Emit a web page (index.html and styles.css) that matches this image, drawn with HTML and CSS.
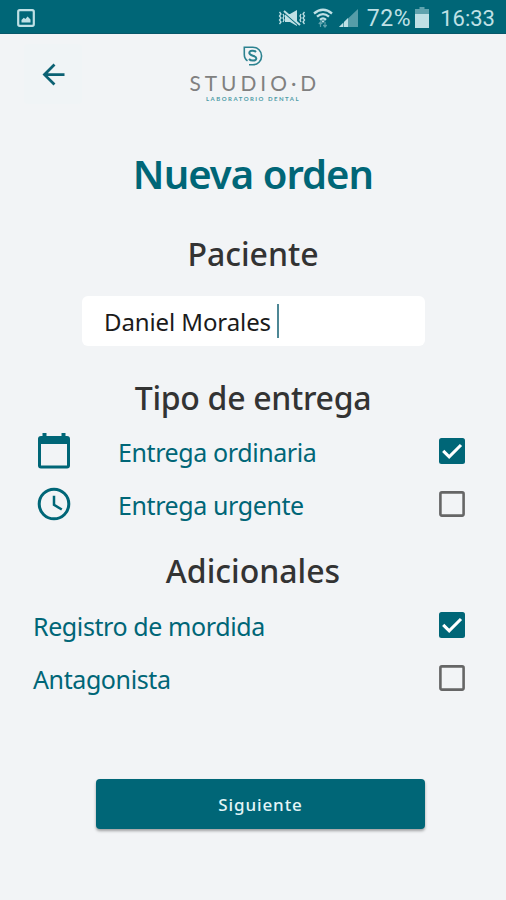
FILE: index.html
```
<!DOCTYPE html>
<html lang="es">
<head>
  <meta charset="UTF-8" />
  <meta name="viewport" content="width=device-width, initial-scale=1.0" />
  <title>Nueva orden</title>
  <link rel="stylesheet" href="styles.css">
</head>
<body>

  <div class="status">
    <svg class="status__picture" viewBox="0 0 18 18" width="18" height="18">
      <rect x="1.2" y="1.2" width="15.6" height="15.6" rx="1.5" fill="none" stroke="currentColor" stroke-width="2.2" />
      <path d="M4.5 13.5V11l2.300-2.200 1.600 1.200 2.200-2.400 2.900 3v2.900z" fill="currentColor" />
    </svg>
    <svg class="status__mute" viewBox="0 0 28 18" width="28" height="18">
      <path d="M1.5 3l1.500 2-1.500 2 1.500 2-1.500 2 1.500 2-1.500 2M5 5l1 2-1 2 1 2-1 2M23 5l-1 2 1 2-1 2 1 2M26.500 3L25 5l1.500 2L25 9l1.500 2L25 13l1.500 2" fill="none" stroke="currentColor" stroke-width="1.300" />
      <path d="M7 5h5l7-4v16l-7-4H7z" fill="currentColor" />
      <path d="M6.500 4l16 14" stroke="#006677" stroke-width="1.500" />
      <path d="M6 2l16 14" stroke="currentColor" stroke-width="2" />
    </svg>
    <svg class="status__wifi" viewBox="0 0 20 20" width="20" height="20">
      <g fill="none" stroke="currentColor" stroke-width="2.300">
        <path d="M1 5.500Q10-2 19 5.500M4 8.700Q10 3.500 16 8.700M7 11.800Q10 9 13 11.800" />
      </g>
      <path d="M8 12.500h4l-2 2.500z" fill="currentColor" />
      <path d="M7.500 19v-5M5.800 16l1.700-2 1.700 2M12 14v5M10.300 17l1.700 2 1.700-2" fill="none" stroke="currentColor" stroke-width="1.200" opacity=".5" />
    </svg>
    <svg class="status__signal" viewBox="0 0 19 18" width="19" height="18">
      <path d="M0 18L19 0v18z" fill="currentColor" opacity=".45" />
      <path d="M0 18l4-4v4zM5 18v-5l4-4v9z" fill="currentColor" />
    </svg>
    <span class="status__percent">72%</span>
    <svg class="status__battery" viewBox="0 0 14 21" width="14" height="21">
      <path d="M4.500 0h5v2H14v6H0V2h4.500z" fill="currentColor" opacity=".5" />
      <path d="M0 7h14v14H0z" fill="currentColor" />
    </svg>
    <span class="status__time">16:33</span>
  </div>

  <header class="header">
    <button class="back" aria-label="Volver">
      <svg viewBox="0 0 24 24" width="33" height="33">
        <path d="M20 11H7.830l5.590-5.590L12 4l-8 8 8 8 1.410-1.410L7.830 13H20z" fill="currentColor" />
      </svg>
    </button>
    <div class="logo">
      <svg class="logo__mark" viewBox="0 0 20 20" width="20" height="20">
        <g fill="none" stroke="currentColor">
          <path d="M4.500 14.800C2 13.200 1.300 11 1.300 8.500V1.200h8.500a8.700 8.700 0 0 1 0 17.600H6" stroke-width="1.600" />
          <path d="M13 6C11.500 4.300 6.300 4 6.300 7c0 3.200 7 2.200 7 5.300 0 3-5.500 2.900-7.300.7" stroke-width="2" />
        </g>
      </svg>
      <span class="logo__name">STUDIO·D</span>
      <span class="logo__tagline">LABORATORIO DENTAL</span>
    </div>
  </header>

  <main class="order">
    <h1 class="title">Nueva orden</h1>

    <h2 class="subtitle">Paciente</h2>
    <div class="field">
      <span class="field__value">Daniel Morales</span>
      <span class="field__cursor"></span>
    </div>

    <h2 class="subtitle subtitle--delivery">Tipo de entrega</h2>
    <div class="option">
      <svg class="option__icon" viewBox="0 0 34 38" width="34" height="38">
        <path d="M5.500 1h4v3h15V1h4v3H30a3 3 0 0 1 3 3v26.500a3 3 0 0 1-3 3H4a3 3 0 0 1-3-3V7a3 3 0 0 1 3-3h1.500zM4 12v21.500h26V12z" fill="currentColor" fill-rule="evenodd" />
      </svg>
      <span class="option__label">Entrega ordinaria</span>
      <svg class="check check--on" viewBox="0 0 26 26" width="26" height="26">
        <rect width="26" height="26" rx="2.500" fill="currentColor" />
        <path d="M4.200 12.800l6 6L22 7" fill="none" stroke="#fff" stroke-width="3.100" />
      </svg>
    </div>
    <div class="option">
      <svg class="option__icon" viewBox="0 0 34 34" width="34" height="34">
        <circle cx="17" cy="17" r="14.800" fill="none" stroke="currentColor" stroke-width="3" />
        <path d="M17 8.800v9l7.800 4.700" fill="none" stroke="currentColor" stroke-width="2.500" />
      </svg>
      <span class="option__label">Entrega urgente</span>
      <svg class="check" viewBox="0 0 26 26" width="26" height="26">
        <rect x="1.400" y="1.400" width="23.200" height="23.200" rx="1.500" fill="none" stroke="currentColor" stroke-width="2.600" />
      </svg>
    </div>

    <h2 class="subtitle subtitle--extras">Adicionales</h2>
    <div class="option">
      <span class="option__label">Registro de mordida</span>
      <svg class="check check--on" viewBox="0 0 26 26" width="26" height="26">
        <rect width="26" height="26" rx="2.500" fill="currentColor" />
        <path d="M4.200 12.800l6 6L22 7" fill="none" stroke="#fff" stroke-width="3.100" />
      </svg>
    </div>
    <div class="option">
      <span class="option__label">Antagonista</span>
      <svg class="check" viewBox="0 0 26 26" width="26" height="26">
        <rect x="1.400" y="1.400" width="23.200" height="23.200" rx="1.500" fill="none" stroke="currentColor" stroke-width="2.600" />
      </svg>
    </div>

    <button class="next">Siguiente</button>
  </main>

</body>
</html>
```
FILE: styles.css
```
* {
  margin: 0;
  padding: 0;
  box-sizing: border-box;
}

body {
  min-height: 100vh;
  font-family: "Noto Sans", sans-serif;
  color: #006677;
  background-color: #f2f4f6;
}

svg {
  display: block;
  flex-shrink: 0;
}

.status {
  display: flex;
  align-items: center;
  height: 34px;
  padding: 2px 11px 0 17px;
  font-family: Roboto, sans-serif;
  font-size: 22px;
  line-height: 30px;
  color: #bfe0e5;
  background-color: #006677;
  border-bottom: 1px solid #07586a;
}

.status__mute {
  margin-left: auto;
}

.status__wifi {
  margin-left: 7px;
}

.status__signal {
  margin-left: 6px;
}

.status__percent {
  margin-left: 9px;
  padding-top: 2px;
  font-size: 23px;
  letter-spacing: 0.6px;
}

.status__battery {
  margin-left: 4px;
}

.status__time {
  margin-left: 11px;
  padding-top: 2px;
}

.header {
  display: flex;
  height: 79px;
  padding: 10px 25px 0 24px;
}

.back {
  display: flex;
  align-items: center;
  justify-content: center;
  width: 58px;
  height: 60px;
  border: none;
  border-radius: 4px;
  color: #0b6173;
  background-color: #f0f4f6;
}

.logo {
  display: flex;
  flex-direction: column;
  align-items: center;
  width: 130px;
  margin-left: 106px;
  padding-top: 2px;
}

.logo__mark {
  color: #2c8290;
}

.logo__name {
  margin-top: 4px;
  margin-right: -4.2px;
  font-family: Lato, sans-serif;
  font-size: 22px;
  font-weight: 400;
  line-height: 26px;
  letter-spacing: 4.2px;
  white-space: nowrap;
  color: #808080;
  transform: scaleX(0.95);
}

.logo__tagline {
  font-family: Lato, sans-serif;
  font-size: 6px;
  font-weight: 700;
  line-height: 6px;
  letter-spacing: 1.5px;
  white-space: nowrap;
  color: #4d9ba6;
}

.order {
  display: flex;
  flex-direction: column;
  padding: 36px 33px 0;
}

.title {
  font-size: 40px;
  font-weight: 600;
  line-height: 50px;
  letter-spacing: -0.95px;
  text-align: center;
}

.subtitle {
  margin-top: 34px;
  font-size: 32px;
  font-weight: 500;
  line-height: 42px;
  text-align: center;
  color: #333;
}

.subtitle--delivery {
  margin-top: 31px;
  letter-spacing: -0.3px;
}

.subtitle--extras {
  margin-top: 19px;
  margin-bottom: 6px;
}

.subtitle--delivery + .option {
  margin-top: 5px;
}

.field {
  display: flex;
  align-items: center;
  height: 50px;
  margin: 21px 48px 0 49px;
  padding-left: 22px;
  border-radius: 6px;
  font-size: 24px;
  letter-spacing: -0.1px;
  color: #1b1b1b;
  background-color: #fff;
}

.field__cursor {
  width: 2px;
  height: 34px;
  margin-left: 6px;
  background-color: #4d8795;
}

.option {
  display: flex;
  align-items: center;
  height: 53.5px;
  padding-right: 8px;
}

.option__icon {
  width: 34px;
  margin: 0 47px 0 4px;
}

.option__label {
  padding-top: 2px;
  font-size: 25px;
  line-height: 50px;
  letter-spacing: -0.4px;
}

.check {
  margin-left: auto;
  color: #666;
}

.check--on {
  color: #006677;
}

.next {
  height: 50px;
  margin: 74px 48px 0 63px;
  border: none;
  border-radius: 4px;
  font-family: inherit;
  font-size: 17px;
  font-weight: 500;
  letter-spacing: 0.9px;
  color: #e3f5f7;
  background-color: #006677;
  box-shadow: 0 2px 3px rgba(0, 0, 0, 0.35);
}
```
